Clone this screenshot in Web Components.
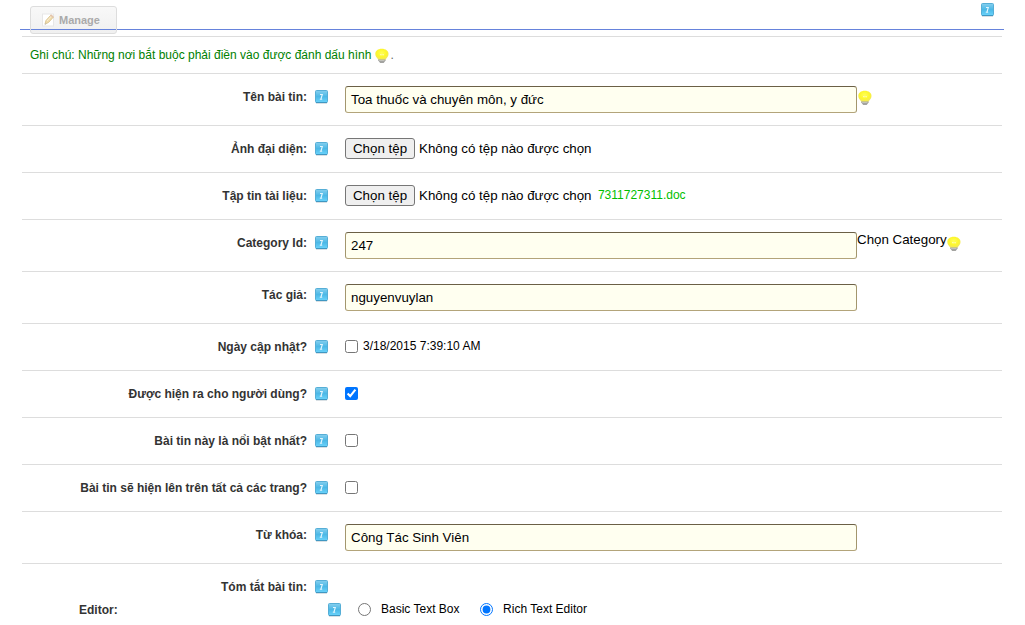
<!DOCTYPE html>
<html lang="vi">
<head>
<meta charset="utf-8">
<title>Manage</title>
<style>
html,body{margin:0;background:#fff}
body{width:1025px;height:625px;overflow:hidden;font:12px/16px "Liberation Sans",Arial,sans-serif;color:#000}
</style>
</head>
<body>
<article-page></article-page>
<script>
function define(name, html) {
  const t = document.createElement('template');
  t.innerHTML = html;
  customElements.define(name, class extends HTMLElement {
    constructor() {
      super();
      this.attachShadow({mode: 'open'}).append(t.content.cloneNode(true));
    }
  });
}

define('help-icon', `<style>:host{display:block;width:13px;height:15px;flex:none}svg{display:block}</style>
<svg width="13" height="15" viewBox="0 0 13 15">
<defs><linearGradient id="g" x2="0" y2="1"><stop stop-color="#86cfee"/><stop offset=".5" stop-color="#4cb8e6"/><stop offset="1" stop-color="#6ad3fb"/></linearGradient></defs>
<rect x="1" y="13" width="11" height="1" fill="#d9e0e4"/>
<rect x=".5" y=".5" width="12" height="12" rx="1" fill="url(#g)" stroke="#56aed6"/>
<path d="M1 12.5h11" stroke="#3f97c2"/>
<path d="M5 4.5h2.3L6 9M4.8 9.3h2.4" fill="none" stroke="#e2f5fd" stroke-width="1.1"/>
</svg>`);

define('bulb-icon', `<style>:host{display:block;width:14px;height:16px;flex:none}svg{display:block}</style>
<svg width="14" height="16" viewBox="0 0 14 16">
<defs><radialGradient id="b" cx=".48" cy=".4" r=".65"><stop stop-color="#ffff58"/><stop offset=".55" stop-color="#fdf72c"/><stop offset="1" stop-color="#eee36a"/></radialGradient></defs>
<path d="M3.2 10.5h7.4v2L8.7 14.9H5.2L3.2 12.5z" fill="#a3a3a0"/>
<path d="M4.2 12.4h5.2" stroke="#c8c8c0"/>
<path d="M6.8.8C2.8.8.3 3 .3 6c0 2.7 1.7 3.7 2.9 5.6h7.4c1.2-1.9 2.9-2.9 2.9-5.6C13.5 3 10.8.8 6.8.8z" fill="url(#b)"/>
<path d="M5 6.2l1.2 1L7 6.3l.9.9 1.2-1" fill="none" stroke="#fffbd0" stroke-width=".8"/>
</svg>`);

define('page-tab', `<style>:host{display:flex;box-sizing:border-box;width:87px;height:28px;border:1px solid #ddd;border-radius:3px;background:linear-gradient(#f8f8f8,#f0f0f0);padding:6px 0 0 11px;gap:4px;font:bold 11px/15px "Liberation Sans",Arial,sans-serif;color:#aaa}svg{flex:none}</style>
<svg width="13" height="14" viewBox="0 0 13 14"><rect x=".5" y="1" width="11" height="12" fill="#fff" stroke="#e7e7e7"/><path d="M3 11l1-3.5L9 2l2.4 2L6.5 9.5z" fill="#f0dcae" stroke="#dcc794"/><path d="M5 8l4.5-5" stroke="#faeed3"/><path d="M8.5 1.9l2.8 2.4" stroke="#e3c3ae" stroke-width="1.5"/><path d="M2.8 11.4l1.5-.7" stroke="#bbb"/></svg><slot></slot>`);

define('text-field', `<style>:host{display:block;box-sizing:border-box;width:512px;height:27px;border:1px solid #a3966d;border-top-color:#6b6046;border-bottom-color:#b3a47a;border-radius:3px;background:#fffff0;padding:0 5px;font-size:13.333px;line-height:26px;white-space:nowrap;flex:none}</style><slot></slot>`);

define('file-picker', `<style>:host{display:flex;gap:4px;font-size:13.333px;line-height:21px;white-space:nowrap}
.b{box-sizing:border-box;width:70px;height:21px;border:1px solid #767676;border-radius:3px;background:#efefef;text-align:center;line-height:19px}</style>
<span class="b">Chọn tệp</span><span>Không có tệp nào được chọn</span>`);

define('check-box', `<style>:host{display:block;width:13px;height:13px}input{display:block;margin:0;width:13px;height:13px}</style><input type="checkbox">`);
customElements.define('check-box-on', class extends HTMLElement {
  constructor() {
    super();
    this.attachShadow({mode: 'open'}).innerHTML = `<style>:host{display:block}input{display:block;margin:0;width:13px;height:13px}</style><input type="checkbox" checked>`;
  }
});

define('form-row', `<style>
:host{display:grid;grid-template-columns:285px 13px 1fr;column-gap:8px;box-sizing:border-box;height:var(--h,47px);border-bottom:1px solid #ddd;padding-top:15px}
.l{text-align:right;font-weight:bold;color:#333;white-space:nowrap}
help-icon{margin-top:1px}
.f{display:flex;align-items:flex-start;padding-left:9px;margin-top:var(--t,-3px)}
</style><div class="l"><slot name="label"></slot></div><help-icon></help-icon><div class="f"><slot></slot></div>`);

define('editor-choice', `<style>:host{display:flex;align-items:flex-start;padding-left:57px;height:22px}
.l{width:249px;font-weight:bold;color:#333;padding-top:1px}
help-icon{margin:2px 17px 0 0}
input{margin:2px 10px 0 0;width:13px;height:13px}
.o{display:flex;white-space:nowrap}.o+.o{margin-left:20.6px}
</style><div class="l">Editor:</div><help-icon></help-icon>
<label class="o"><input type="radio" name="e">Basic Text Box</label>
<label class="o"><input type="radio" name="e" checked>Rich Text Editor</label>`);

define('article-page', `<style>
:host{display:block;--rule:linear-gradient(#6683dc,#6683dc)}
.top{display:flex;justify-content:space-between;box-sizing:border-box;height:36px;padding:6px 31px 0 30px;background:var(--rule) 20px 29px/984px 1px no-repeat}
.top help-icon{margin-top:-3px}
.top page-tab{background:var(--rule) 0 22px/100% 1px no-repeat,linear-gradient(#f8f8f8,#f0f0f0)}
main{margin:0 23px 0 22px;border-top:1px solid #ddd}
.note{display:flex;height:36px;border-bottom:1px solid #ddd;padding-left:8px;color:#008000;line-height:36px;white-space:nowrap}
.note bulb-icon{margin:11px 1px 0 4px}
.tall{--h:52px;--t:-3px}
.dot{color:#666}
a{color:#00c000;margin-left:6.4px;line-height:20px}
.chk{--t:1px}.date{margin:-2px 0 0 5px}
.cat{font-size:13.333px;margin-top:0}
.last{border:0;--h:37px}
</style>
<div class="top"><page-tab>Manage</page-tab><help-icon></help-icon></div>
<main>
<div class="note"><span>Ghi chú: Những nơi bắt buộc phải điền vào được đánh dấu hình</span><bulb-icon></bulb-icon><span class="dot">.</span></div>
<form-row class="tall"><span slot="label">Tên bài tin:</span><text-field>Toa thuốc và chuyên môn, y đức</text-field><bulb-icon style="margin:4px 0 0 1px"></bulb-icon></form-row>
<form-row><span slot="label">Ảnh đại diện:</span><file-picker></file-picker></form-row>
<form-row><span slot="label">Tập tin tài liệu:</span><file-picker></file-picker><a>7311727311.doc</a></form-row>
<form-row class="tall"><span slot="label">Category Id:</span><text-field>247</text-field><span class="cat">Chọn Category</span><bulb-icon style="margin:4px 0 0 0"></bulb-icon></form-row>
<form-row class="tall"><span slot="label">Tác giả:</span><text-field>nguyenvuylan</text-field></form-row>
<form-row class="chk"><span slot="label">Ngày cập nhật?</span><check-box></check-box><span class="date">3/18/2015 7:39:10 AM</span></form-row>
<form-row class="chk"><span slot="label">Được hiện ra cho người dùng?</span><check-box-on></check-box-on></form-row>
<form-row class="chk"><span slot="label">Bài tin này là nổi bật nhất?</span><check-box></check-box></form-row>
<form-row class="chk"><span slot="label">Bài tin sẽ hiện lên trên tất cả các trang?</span><check-box></check-box></form-row>
<form-row class="tall"><span slot="label">Từ khóa:</span><text-field>Công Tác Sinh Viên</text-field></form-row>
<form-row class="last"><span slot="label">Tóm tắt bài tin:</span></form-row>
<editor-choice></editor-choice>
</main>`);
</script>
</body>
</html>
